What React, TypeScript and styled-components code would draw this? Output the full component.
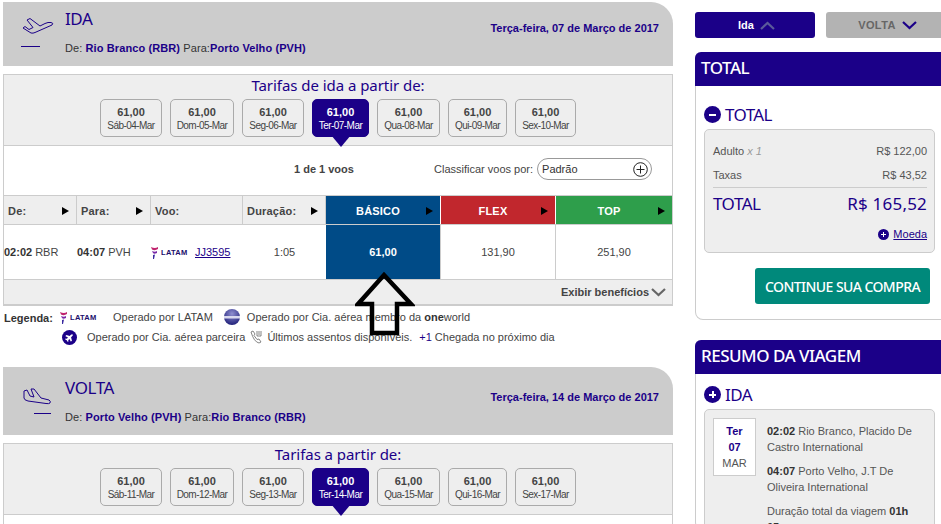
import styled, { createGlobalStyle } from "styled-components";
import { FaPlane } from "react-icons/fa";

const NAVY = "#1b0088";

const Global = createGlobalStyle`
  html, body { margin: 0; padding: 0; background: #fff; }
  body { font-family: "Liberation Sans", Arial, sans-serif; font-size: 11px; color: #444; }
  * { box-sizing: border-box; }
`;

const Page = styled.div`
  position: relative;
  display: flex;
  gap: 22px;
  width: 941px;
  height: 524px;
  padding: 2px 0 0 3px;
  overflow: hidden;
`;

const LeftCol = styled.div`
  width: 670px;
  flex: none;
`;

const RightCol = styled.div`
  width: 252px;
  flex: none;
  padding-top: 10px;
`;

const Section = styled.section<{ $top?: number }>`
  margin-top: ${(p) => p.$top || 0}px;
`;

const Header = styled.div<{ $h: number; $pad: number }>`
  height: ${(p) => p.$h}px;
  background: #cccccc;
  border-top-right-radius: 22px;
  display: grid;
  grid-template-columns: 62px 1fr auto;
  padding: ${(p) => p.$pad}px 14px 0 0;
`;

const IconCell = styled.div<{ $back?: boolean }>`
  padding: ${(p) => (p.$back ? "10px 0 0 19px" : "8px 0 0 18px")};
`;

const Title = styled.h2`
  margin: 0;
  font-family: "Noto Sans", sans-serif;
  font-weight: 400;
  font-size: 17px;
  line-height: 20px;
  letter-spacing: -0.4px;
  color: ${NAVY};
`;

const Route = styled.div`
  margin-top: 12px;
  line-height: 14px;
  color: #333;
  letter-spacing: 0.1px;
  b { color: ${NAVY}; }
`;

const DateText = styled.div`
  margin-top: 12px;
  font-weight: 700;
  color: ${NAVY};
  line-height: 14px;
`;

const Box = styled.div`
  margin-top: 8px;
  border: 1px solid #ccc;
  border-bottom-width: 2px;
`;

const FareBand = styled.div`
  height: 71px;
  background: #eeeeee;
  border-bottom: 1px solid #ccc;
  text-align: center;
`;

const FareTitle = styled.div`
  font-family: "Noto Sans", sans-serif;
  font-size: 15px;
  line-height: 20px;
  letter-spacing: -0.05px;
  color: ${NAVY};
  margin-bottom: 4px;
`;

const FareRow = styled.div`
  display: flex;
  justify-content: center;
  gap: 8px;
`;

const FareButton = styled.div<{ $w: number; $active?: boolean }>`
  position: relative;
  width: ${(p) => p.$w}px;
  height: 38px;
  border-radius: 5px;
  border: 1px solid ${(p) => (p.$active ? NAVY : "#aaa")};
  background: ${(p) => (p.$active ? NAVY : "#eee")};
  color: ${(p) => (p.$active ? "#fff" : "#444")};
  padding-top: 6px;
  text-align: center;
  strong {
    display: block;
    font-size: 11px;
    line-height: 13px;
  }
  span {
    display: block;
    font-size: 10px;
    line-height: 13px;
    letter-spacing: -0.55px;
    white-space: nowrap;
  }
  ${(p) =>
    p.$active &&
    `&::after {
      content: "";
      position: absolute;
      left: 50%;
      bottom: -11px;
      margin-left: -10px;
      border-left: 10px solid transparent;
      border-right: 10px solid transparent;
      border-top: 12px solid ${NAVY};
    }`}
`;

const SortBar = styled.div`
  height: 49px;
  display: flex;
  align-items: center;
  padding: 0 0 3px 290px;
`;

const Count = styled.b`
  width: 140px;
  color: #444;
`;

const SortLabel = styled.span`
  margin-right: 4px;
  color: #444;
`;

const SortSelect = styled.div`
  width: 115px;
  height: 22px;
  border: 1px solid #999;
  border-radius: 11px;
  padding: 0 3px 0 4px;
  display: flex;
  align-items: center;
  justify-content: space-between;
  color: #333;
`;

const COLS = "73px 74px 92px 83px 115px 115px 116px";

const HeadRow = styled.div`
  display: grid;
  grid-template-columns: ${COLS};
  height: 30px;
  border-top: 1px solid #ccc;
  border-bottom: 1px solid #ccc;
  background: #eee;
`;

const HeadCell = styled.div<{ $bg?: string }>`
  display: flex;
  align-items: center;
  justify-content: space-between;
  padding: 1px 7px 0 4px;
  font-weight: 700;
  color: ${(p) => (p.$bg ? "#fff" : "#444")};
  letter-spacing: 0.2px;
  background: ${(p) => p.$bg || "transparent"};
  border-right: 1px solid ${(p) => (p.$bg ? "#fff" : "#ccc")};
  &:last-child { border-right: 0; }
`;

const HeadName = styled.span<{ $center?: boolean }>`
  flex: 1;
  text-align: ${(p) => (p.$center ? "center" : "left")};
`;

const Arrow = styled.i`
  width: 0;
  height: 0;
  border-top: 4px solid transparent;
  border-bottom: 4px solid transparent;
  border-left: 7px solid #000;
`;

const BodyRow = styled.div`
  display: grid;
  grid-template-columns: ${COLS};
  height: 55px;
  border-bottom: 1px solid #ccc;
  background: #fff;
`;

const TimeCell = styled.div`
  display: flex;
  align-items: center;
  gap: 3px;
  b { color: #333; }
`;

const FlightCell = styled.div`
  display: flex;
  align-items: center;
  a { color: ${NAVY}; text-decoration: underline; margin-left: 6px; }
`;

const DurationCell = styled.div`
  display: flex;
  align-items: center;
  justify-content: center;
`;

const PriceCell = styled.div<{ $active?: boolean }>`
  display: flex;
  align-items: center;
  justify-content: center;
  background: ${(p) => (p.$active ? "#004b87" : "#fff")};
  color: ${(p) => (p.$active ? "#fff" : "#444")};
  font-weight: ${(p) => (p.$active ? 700 : 400)};
  border-right: 1px solid #ccc;
  &:last-child { border-right: 0; }
`;

const BenefitsBar = styled.div`
  height: 24px;
  background: #eee;
  display: flex;
  align-items: center;
  justify-content: flex-end;
  gap: 2px;
  padding-right: 6px;
  font-weight: 700;
  color: #444;
`;

const Legend = styled.div`
  padding: 1px 0 0 1px;
  color: #444;
`;

const LegendRow = styled.div<{ $indent?: number }>`
  display: flex;
  align-items: center;
  height: 20px;
  padding-left: ${(p) => p.$indent || 0}px;
`;

const LegendTitle = styled.b`
  width: 56px;
  color: #333;
  padding-top: 2px;
`;

const LegendText = styled.span<{ $left: number }>`
  margin-left: ${(p) => p.$left}px;
  white-space: nowrap;
  display: inline-flex;
  align-items: center;
  gap: 3px;
  b { color: #333; }
  em { font-style: normal; color: ${NAVY}; }
`;

const Logo = styled.span`
  display: inline-flex;
  align-items: center;
  gap: 2px;
  width: 38px;
  font-size: 7.5px;
  font-weight: 700;
  letter-spacing: 0.3px;
  color: #1b0f6b;
  white-space: nowrap;
`;

const RoundIcon = styled.span`
  width: 15px;
  height: 15px;
  border-radius: 50%;
  background: ${NAVY};
  color: #fff;
  display: inline-flex;
  align-items: center;
  justify-content: center;
  font-size: 9px;
`;

const TiltedPlane = styled(FaPlane)`
  transform: rotate(-45deg);
`;

const Tabs = styled.div`
  display: flex;
  gap: 11px;
  margin-bottom: 14px;
`;

const Tab = styled.div<{ $active?: boolean }>`
  width: ${(p) => (p.$active ? 120 : 121)}px;
  height: 26px;
  border-radius: 3px;
  padding-left: ${(p) => (p.$active ? 3 : 2)}px;
  background: ${(p) => (p.$active ? NAVY : "#b3b3b3")};
  color: ${(p) => (p.$active ? "#fff" : "#666")};
  font-weight: 700;
  display: flex;
  align-items: center;
  justify-content: center;
  gap: 6px;
  letter-spacing: ${(p) => (p.$active ? 0 : 0.4)}px;
`;

const Panel = styled.div<{ $top?: number; $h: number }>`
  margin-top: ${(p) => p.$top || 0}px;
  height: ${(p) => p.$h}px;
  border: 1px solid #ccc;
  border-top: 0;
  border-radius: 6px 0 0 8px;
`;

const PanelBar = styled.div`
  height: 34px;
  margin: 0 -1px;
  padding-left: 6px;
  border-radius: 6px 0 0 0;
  background: ${NAVY};
  color: #fff;
  font-family: "Noto Sans", sans-serif;
  font-size: 17px;
  font-weight: 500;
  line-height: 32px;
  letter-spacing: -0.5px;
`;

const PanelHead = styled.div<{ $top: number }>`
  display: flex;
  align-items: center;
  gap: 4px;
  margin: ${(p) => p.$top}px 0 5px 8px;
  height: 20px;
  font-family: "Noto Sans", sans-serif;
  font-size: 17px;
  letter-spacing: -0.6px;
  color: ${NAVY};
`;

const Circle = styled.span`
  width: 17px;
  height: 17px;
  border-radius: 50%;
  background: ${NAVY};
  position: relative;
  flex: none;
  &::before {
    content: "";
    position: absolute;
    left: 5px;
    top: 8px;
    width: 7px;
    height: 2px;
    background: #fff;
  }
`;

const PlusCircle = styled(Circle)<{ $small?: boolean }>`
  width: ${(p) => (p.$small ? 11 : 17)}px;
  height: ${(p) => (p.$small ? 11 : 17)}px;
  &::before {
    left: ${(p) => (p.$small ? 3 : 5)}px;
    top: ${(p) => (p.$small ? 5 : 8)}px;
    width: ${(p) => (p.$small ? 5 : 7)}px;
    height: ${(p) => (p.$small ? 1 : 2)}px;
  }
  &::after {
    content: "";
    position: absolute;
    left: ${(p) => (p.$small ? 5 : 8)}px;
    top: ${(p) => (p.$small ? 3 : 5)}px;
    width: ${(p) => (p.$small ? 1 : 2)}px;
    height: ${(p) => (p.$small ? 5 : 7)}px;
    background: #fff;
  }
`;

const GreyBox = styled.div<{ $h: number }>`
  margin: 0 11px 0 8px;
  height: ${(p) => p.$h}px;
  background: #eee;
  border: 1px solid #ccc;
  border-radius: 5px;
`;

const CostRows = styled.div`
  padding: 9px 7px 0 8px;
`;

const CostRow = styled.div`
  display: flex;
  justify-content: space-between;
  height: 24px;
  line-height: 24px;
  color: #555;
  i { color: #999; }
`;

const GrandRow = styled.div`
  display: flex;
  justify-content: space-between;
  border-top: 1px solid #ccc;
  height: 32px;
  line-height: 32px;
  font-family: "Noto Sans", sans-serif;
  font-size: 17px;
  letter-spacing: -0.5px;
  color: ${NAVY};
`;

const GrandValue = styled.span`
  letter-spacing: 0.2px;
`;

const MoedaRow = styled.div`
  display: flex;
  justify-content: flex-end;
  align-items: center;
  gap: 4px;
  margin-top: 9px;
  a { color: ${NAVY}; text-decoration: underline; }
`;

const ContinueButton = styled.div`
  width: 175px;
  height: 36px;
  margin: 15px 0 0 59px;
  background: #00897b;
  border-radius: 3px;
  color: #fff;
  font-family: "Noto Sans", sans-serif;
  font-size: 14px;
  font-weight: 500;
  letter-spacing: -0.55px;
  display: flex;
  align-items: center;
  justify-content: center;
`;

const TripBody = styled.div`
  display: flex;
  padding: 8px 8px 0;
  gap: 11px;
`;

const DateCard = styled.div`
  width: 43px;
  height: 58px;
  flex: none;
  background: #fff;
  border: 1px solid #ccc;
  text-align: center;
  padding-top: 4px;
  line-height: 16px;
  color: #555;
  b { display: block; color: ${NAVY}; }
`;

const TripText = styled.div`
  width: 150px;
  padding-top: 5px;
  line-height: 16px;
  color: #555;
  p { margin: 0 0 8px; }
  b { color: #333; }
`;

const BigArrow = styled.svg`
  position: absolute;
  left: 355px;
  top: 271px;
`;

const PlaneUp = () => (
  <svg width="34" height="18" viewBox="0 0 34 18" fill="none" stroke={NAVY} strokeWidth="1" strokeLinejoin="round">
    <path d="M2 11 L10 16 Q12 16.5 14 15.5 L31 8 Q33 6 30 5.5 Q27 5 24 6.5 L19 9 L9 1.5 L6 3 L12 10.5 L8 12.5 L4 9.5 Z" />
  </svg>
);

const PlaneDown = () => (
  <svg width="30" height="18" viewBox="0 0 30 18" fill="none" stroke={NAVY} strokeWidth="1" strokeLinejoin="round">
    <path d="M2 3 L5 2 L8 8 L12 9 L9 1 L12 1 L19 10 L27 12 Q29 13 28 15 Q27 16 24 15.5 L6 13 Q2 12 2 10 Z" />
  </svg>
);

const Dash = styled.div<{ $w: number; $left?: number; $top: number }>`
  width: ${(p) => p.$w}px;
  height: 1px;
  background: ${NAVY};
  margin: ${(p) => p.$top}px 0 0 ${(p) => p.$left || 0}px;
`;

const Chevron = ({ up, color, w = 15 }: { up?: boolean; color: string; w?: number }) => (
  <svg width={w} height="9" viewBox="0 0 15 9" fill="none" stroke={color} strokeWidth="2.2">
    <path d={up ? "M1 8 L7.5 2 L14 8" : "M1 1 L7.5 7 L14 1"} />
  </svg>
);

const LatamLogo = () => (
  <Logo>
    <svg width="8" height="13" viewBox="0 0 8 13">
      <path d="M0 1 Q4 3 7 1 L7 3 Q4 5 1 3.5 Z" fill="#c0246e" />
      <path d="M1 5 Q4 6.5 6 5 L6 7 Q3 8.5 2 7 Z" fill="#7a2aa8" />
      <path d="M2 9 L4 8.5 L3 13 L2 13 Z" fill="#3a2aa0" />
    </svg>
    LATAM
  </Logo>
);

const Globe = () => (
  <svg width="16" height="16" viewBox="0 0 16 16">
    <defs>
      <radialGradient id="gl" cx="50%" cy="30%" r="70%">
        <stop offset="0%" stopColor="#8f8fd0" />
        <stop offset="100%" stopColor="#20207a" />
      </radialGradient>
    </defs>
    <circle cx="8" cy="8" r="8" fill="url(#gl)" />
    <rect x="0" y="7" width="16" height="2.5" fill="#d8d8ee" />
  </svg>
);

const PhoneMark = () => (
  <svg width="13" height="14" viewBox="0 0 13 14" fill="none" stroke="#777" strokeWidth="0.9">
    <path d="M1 2 L3 1 L5 4 L4 5.5 L7 9.5 L9 9 L11 12 L9 13 Q4 12 1 2 Z" />
    <path d="M7 1 V6 M9 1 V5 M11 1 V6 M7 6 H11" />
  </svg>
);

const PlusSmall = () => (
  <svg width="15" height="15" viewBox="0 0 15 15" fill="none" stroke="#222" strokeWidth="1">
    <circle cx="7.5" cy="7.5" r="6.8" />
    <path d="M7.5 3.5 V11.5 M3.5 7.5 H11.5" />
  </svg>
);

const WIDTHS = [62, 64, 62, 57, 63, 59, 61];

type Day = { label: string; active?: boolean };

const FareDays = ({ days }: { days: Day[] }) => (
  <FareRow>
    {days.map((d, i) => (
      <FareButton key={d.label} $w={WIDTHS[i]} $active={d.active}>
        <strong>61,00</strong>
        <span>{d.label}</span>
      </FareButton>
    ))}
  </FareRow>
);

const idaDays: Day[] = [
  { label: "Sáb-04-Mar" },
  { label: "Dom-05-Mar" },
  { label: "Seg-06-Mar" },
  { label: "Ter-07-Mar", active: true },
  { label: "Qua-08-Mar" },
  { label: "Qui-09-Mar" },
  { label: "Sex-10-Mar" },
];

const voltaDays: Day[] = [
  { label: "Sáb-11-Mar" },
  { label: "Dom-12-Mar" },
  { label: "Seg-13-Mar" },
  { label: "Ter-14-Mar", active: true },
  { label: "Qua-15-Mar" },
  { label: "Qui-16-Mar" },
  { label: "Sex-17-Mar" },
];

export default function App() {
  return (
    <Page>
      <Global />
      <LeftCol>
        <Section>
          <Header $h={64} $pad={7}>
            <IconCell>
              <PlaneUp />
              <Dash $w={19} $top={9} />
            </IconCell>
            <div>
              <Title>IDA</Title>
              <Route>
                De: <b>Rio Branco (RBR)</b> Para:<b>Porto Velho (PVH)</b>
              </Route>
            </div>
            <DateText>Terça-feira, 07 de Março de 2017</DateText>
          </Header>
          <Box>
            <FareBand>
              <FareTitle>Tarifas de ida a partir de:</FareTitle>
              <FareDays days={idaDays} />
            </FareBand>
            <SortBar>
              <Count>1 de 1 voos</Count>
              <SortLabel>Classificar voos por:</SortLabel>
              <SortSelect>
                Padrão
                <PlusSmall />
              </SortSelect>
            </SortBar>
            <HeadRow>
              <HeadCell><HeadName>De:</HeadName><Arrow /></HeadCell>
              <HeadCell><HeadName>Para:</HeadName><Arrow /></HeadCell>
              <HeadCell><HeadName>Voo:</HeadName></HeadCell>
              <HeadCell><HeadName>Duração:</HeadName><Arrow /></HeadCell>
              <HeadCell $bg="#004b87"><HeadName $center>BÁSICO</HeadName><Arrow /></HeadCell>
              <HeadCell $bg="#c1272d"><HeadName $center>FLEX</HeadName><Arrow /></HeadCell>
              <HeadCell $bg="#2e9e4b"><HeadName $center>TOP</HeadName><Arrow /></HeadCell>
            </HeadRow>
            <BodyRow>
              <TimeCell><b>02:02</b> RBR</TimeCell>
              <TimeCell><b>04:07</b> PVH</TimeCell>
              <FlightCell>
                <LatamLogo />
                <a>JJ3595</a>
              </FlightCell>
              <DurationCell>1:05</DurationCell>
              <PriceCell $active>61,00</PriceCell>
              <PriceCell>131,90</PriceCell>
              <PriceCell>251,90</PriceCell>
            </BodyRow>
            <BenefitsBar>
              Exibir benefícios
              <Chevron color="#666" />
            </BenefitsBar>
          </Box>
          <Legend>
            <LegendRow>
              <LegendTitle>Legenda:</LegendTitle>
              <LatamLogo />
              <LegendText $left={15}>Operado por LATAM</LegendText>
              <LegendText $left={11}><Globe /></LegendText>
              <LegendText $left={7}><span>Operado por Cia. aérea membro da <b>one</b>world</span></LegendText>
            </LegendRow>
            <LegendRow $indent={58}>
              <RoundIcon><TiltedPlane /></RoundIcon>
              <LegendText $left={10}>Operado por Cia. aérea parceira</LegendText>
              <LegendText $left={5}><PhoneMark /></LegendText>
              <LegendText $left={4}>Últimos assentos disponíveis.</LegendText>
              <LegendText $left={7}><em>+1</em> Chegada no próximo dia</LegendText>
            </LegendRow>
          </Legend>
        </Section>
        <Section $top={20}>
          <Header $h={68} $pad={11}>
            <IconCell $back>
              <PlaneDown />
              <Dash $w={17} $left={12} $top={5} />
            </IconCell>
            <div>
              <Title>VOLTA</Title>
              <Route>
                De: <b>Porto Velho (PVH)</b> Para:<b>Rio Branco (RBR)</b>
              </Route>
            </div>
            <DateText>Terça-feira, 14 de Março de 2017</DateText>
          </Header>
          <Box>
            <FareBand>
              <FareTitle>Tarifas a partir de:</FareTitle>
              <FareDays days={voltaDays} />
            </FareBand>
            <SortBar />
          </Box>
        </Section>
      </LeftCol>
      <RightCol>
        <Tabs>
          <Tab $active>Ida <Chevron up color="#5a5a9a" /></Tab>
          <Tab>VOLTA <Chevron color={NAVY} /></Tab>
        </Tabs>
        <Panel $h={268}>
          <PanelBar>TOTAL</PanelBar>
          <PanelHead $top={18}><Circle />TOTAL</PanelHead>
          <GreyBox $h={124}>
            <CostRows>
              <CostRow><span>Adulto <i>x 1</i></span><span>R$ 122,00</span></CostRow>
              <CostRow><span>Taxas</span><span>R$ 43,52</span></CostRow>
              <GrandRow><span>TOTAL</span><GrandValue>R$ 165,52</GrandValue></GrandRow>
              <MoedaRow><PlusCircle $small /><a>Moeda</a></MoedaRow>
            </CostRows>
          </GreyBox>
          <ContinueButton>CONTINUE SUA COMPRA</ContinueButton>
        </Panel>
        <Panel $top={20} $h={190}>
          <PanelBar>RESUMO DA VIAGEM</PanelBar>
          <PanelHead $top={10}><PlusCircle />IDA</PanelHead>
          <GreyBox $h={130}>
            <TripBody>
              <DateCard><b>Ter</b><b>07</b>MAR</DateCard>
              <TripText>
                <p><b>02:02</b> Rio Branco, Placido De Castro International</p>
                <p><b>04:07</b> Porto Velho, J.T De Oliveira International</p>
                <p>Duração total da viagem <b>01h 05</b></p>
              </TripText>
            </TripBody>
          </GreyBox>
        </Panel>
      </RightCol>
      <BigArrow width="60" height="68" viewBox="0 0 60 68" fill="none" stroke="#000" strokeWidth="4.5" strokeLinejoin="miter">
        <path d="M29 4 L56 33 H42 V62 H17 V33 H3 Z" />
      </BigArrow>
    </Page>
  );
}
